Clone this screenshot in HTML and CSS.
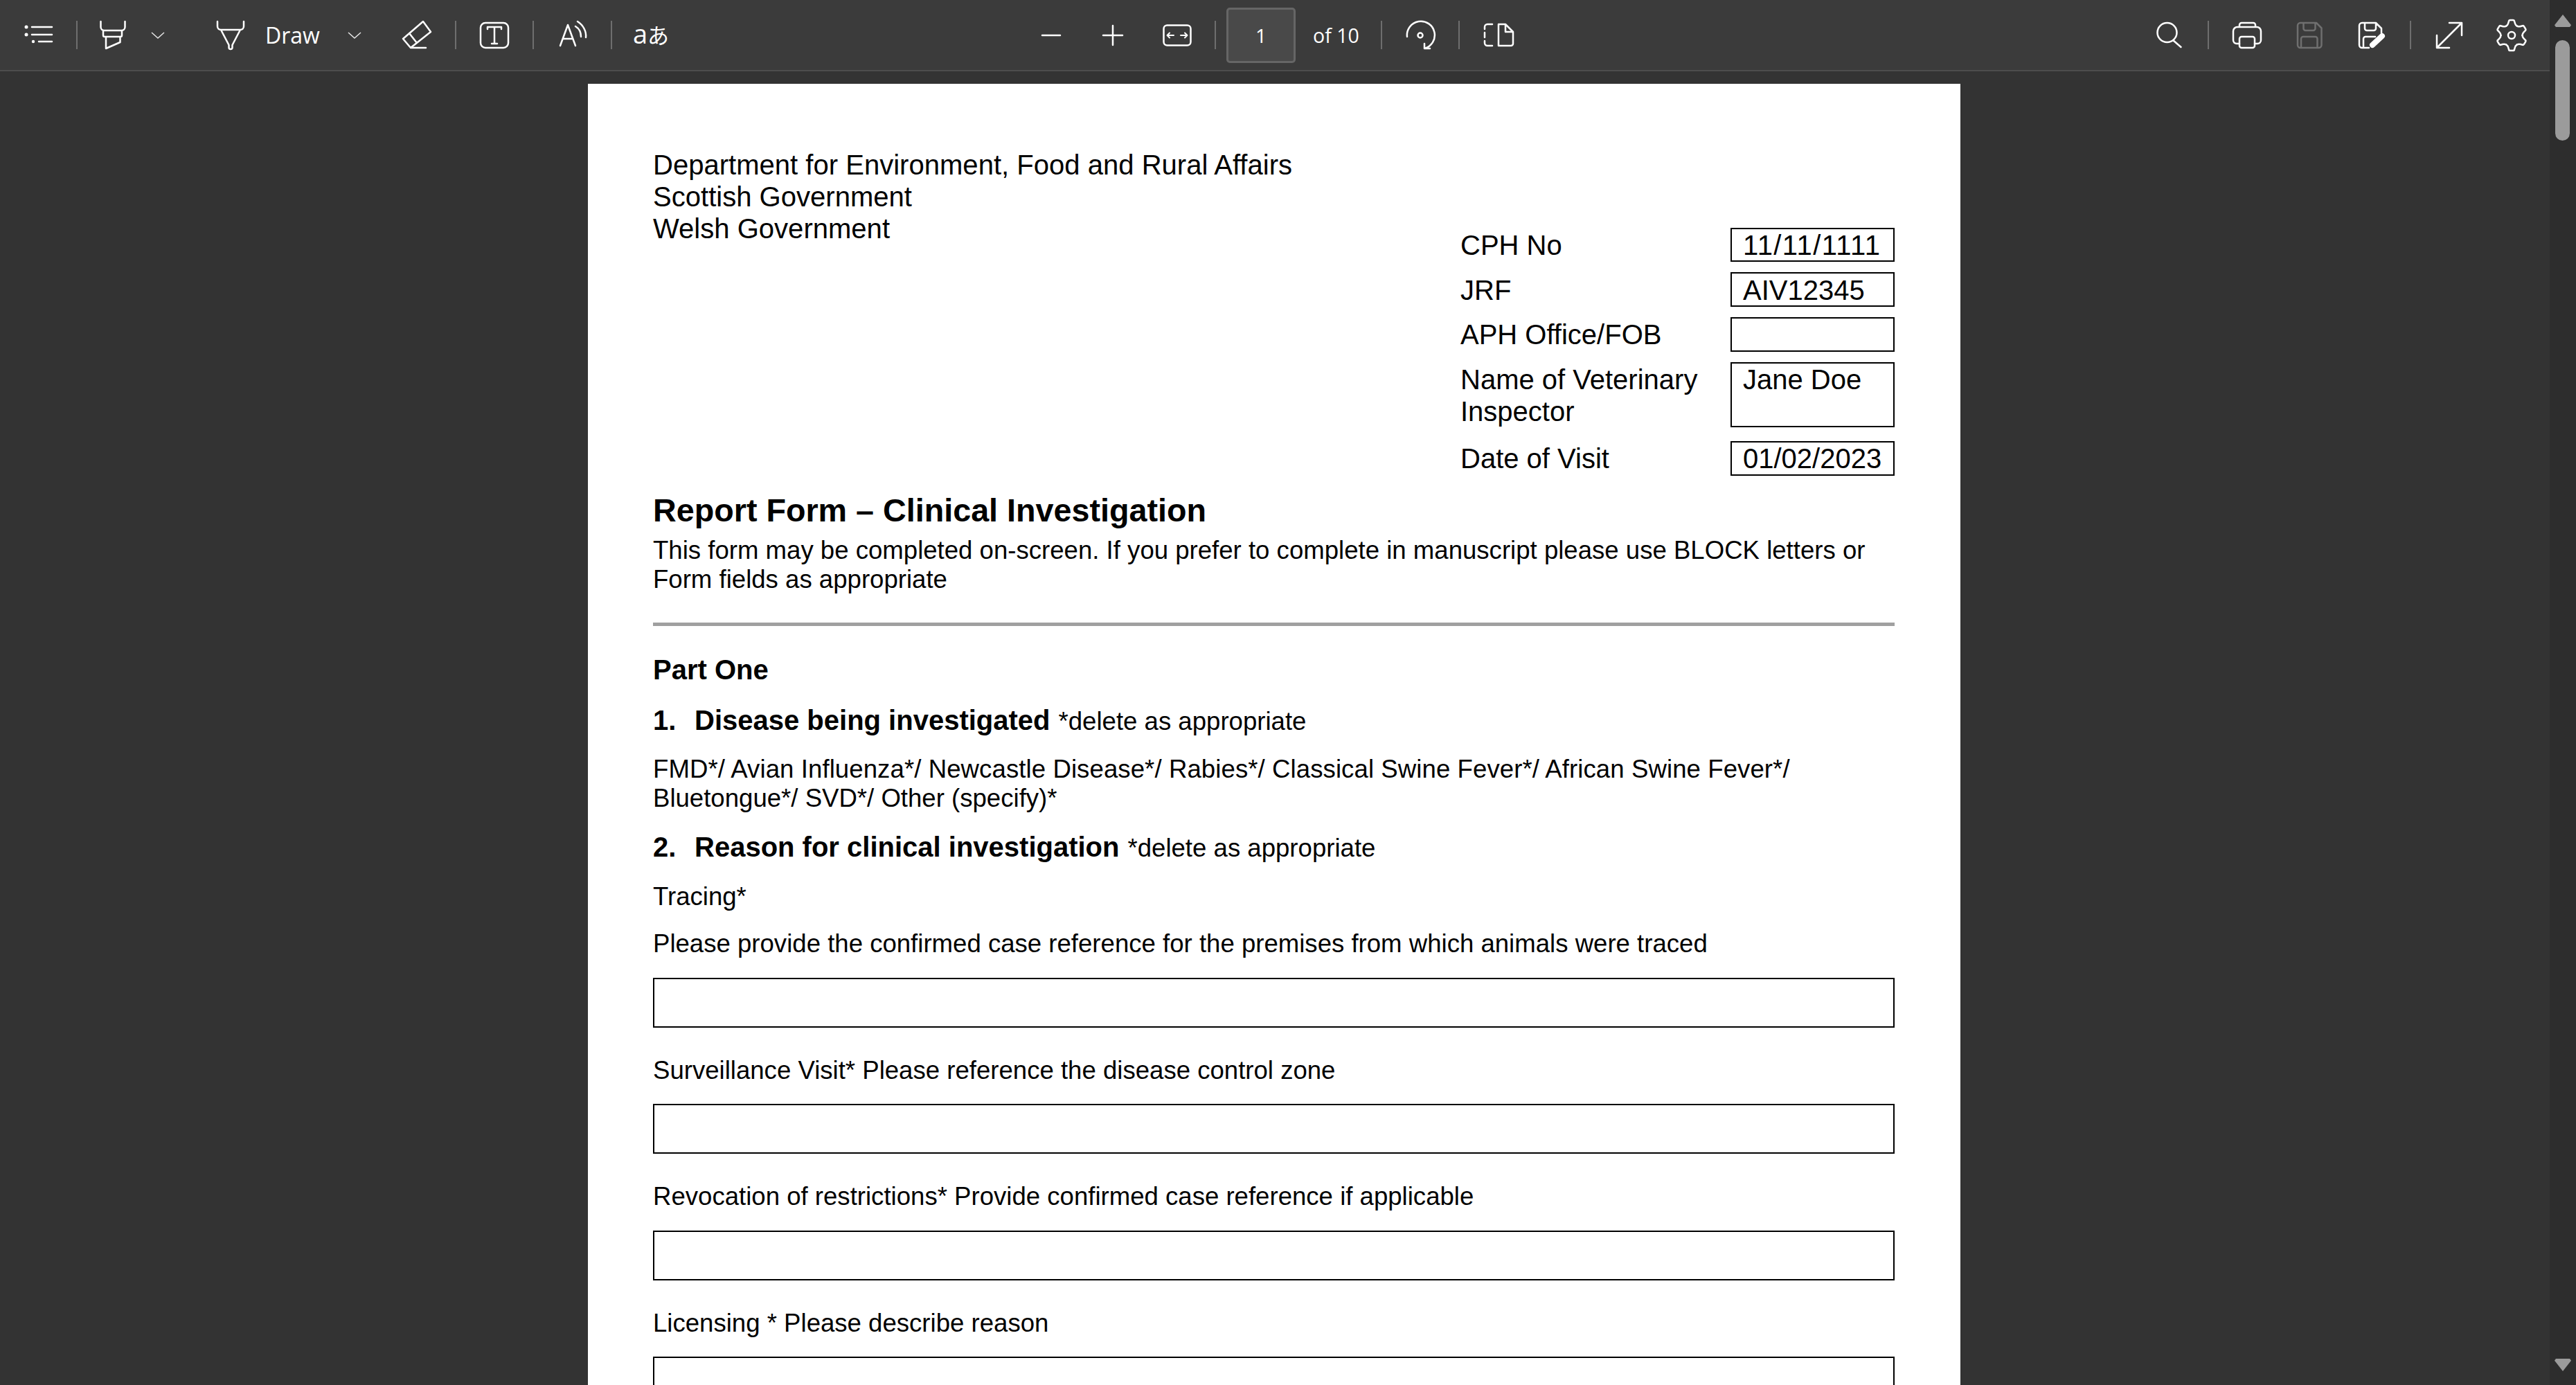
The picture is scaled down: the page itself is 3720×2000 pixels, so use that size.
FILE: index.html
```html
<!DOCTYPE html>
<html lang="en">
<head>
<meta charset="utf-8">
<title>PDF viewer</title>
<link rel="stylesheet" href="styles.css">
</head>
<body>
<div class="app">
  <div class="main">
    <header class="toolbar">
      <div class="group group-left">
        <span class="slot s110"><svg class="ic" viewBox="0 0 48 48"><path d="M15 12H44M15 23H44M25 33H44"/><circle class="fill" cx="7" cy="12" r="2.5"/><circle class="fill" cx="7" cy="23" r="2.5"/><circle class="fill" cx="17" cy="33" r="2.2"/></svg></span>
        <span class="sep"></span>
        <span class="slot s100"><svg class="ic" viewBox="0 0 48 48"><path d="M7.5 4V12a5 5 0 0 0 5 5H37.5a5 5 0 0 0 5-5V4M11 17V24a2 2 0 0 0 2 2H36a2 2 0 0 0 2-2V17M15 26V43L35.5 34V26"/></svg></span>
        <span class="slot s32"><svg class="chev" viewBox="0 0 20 10"><path d="M1 1L10 9L19 1"/></svg></span>
        <span class="slot s38 ml70"><svg class="ic" viewBox="0 0 48 48"><path d="M5 4V11a5 5 0 0 0 5 5H38a5 5 0 0 0 5-5V4M10 16L21.5 38V41.5a2.5 2.5 0 0 0 5 0V38L38 16"/></svg></span>
        <span class="draw">Draw</span>
        <span class="slot s32"><svg class="chev" viewBox="0 0 20 10"><path d="M1 1L10 9L19 1"/></svg></span>
        <span class="slot s111 ml18"><svg class="ic" viewBox="0 0 48 48"><path d="M33 4L44 19L15 42L4 29ZM13 21L24 35M15 42H37"/></svg></span>
        <span class="sep"></span>
        <span class="slot s110"><svg class="ic" viewBox="0 0 48 48"><rect x="4" y="6" width="40" height="36" rx="7"/><path d="M14 15V12H34V15M24 12V36M20 36H28"/></svg></span>
        <span class="sep"></span>
        <span class="slot s111"><svg class="ic" viewBox="0 0 48 48"><path d="M6 39L17 9L28 39M10 29H24M31 4C39 9 44 18 43 27M28 11C33 14 36 20 36 26"/></svg></span>
        <span class="sep"></span>
        <span class="slot s112"><span class="translate"><span class="latin">a</span>あ</span></span>
      </div>
      <div class="group group-center">
        <span class="slot s90"><svg class="ic" viewBox="0 0 48 48"><path d="M11 24H37"/></svg></span>
        <span class="slot s88"><svg class="ic" viewBox="0 0 48 48"><path d="M10 24H38M24 10V38"/></svg></span>
        <span class="slot s98"><svg class="ic" viewBox="0 0 48 48"><rect x="4.5" y="9.5" width="39" height="29" rx="5"/><path class="thin" d="M9.5 24H19M9.5 24L13 20.5M9.5 24L13 27.500M38.500 24H29M38.500 24L35 20.500M38.500 24L35 27.500"/></svg></span>
        <span class="sep ml5"></span>
        <span class="page-input">1</span>
        <span class="page-total">of 10</span>
        <span class="sep"></span>
        <span class="slot s110"><svg class="ic" viewBox="0 0 48 48"><path d="M5 26A20 20 0 1 1 30 43M30 36V43H38"/><circle cx="24" cy="24" r="3.500"/></svg></span>
        <span class="sep"></span>
        <span class="slot s114"><svg class="ic" viewBox="0 0 48 48"><path d="M23 8H33L44 19V36a3 3 0 0 1-3 3H23ZM33 8V19H44"/><path d="M14 8H7a4 4 0 0 0-4 4V15M3 20V27M3 32V35a4 4 0 0 0 4 4H14"/></svg></span>
      </div>
      <div class="group group-right">
        <span class="slot s110"><svg class="ic" viewBox="0 0 48 48"><circle cx="20.500" cy="20" r="14"/><path d="M29 31L40.500 41"/></svg></span>
        <span class="sep"></span>
        <span class="slot s110"><svg class="ic" viewBox="0 0 48 48"><path d="M13 12V9a3 3 0 0 1 3-3H33a3 3 0 0 1 3 3V12M13 36H9a5 5 0 0 1-5-5V18a6 6 0 0 1 6-6H38a6 6 0 0 1 6 6V31a5 5 0 0 1-5 5H35"/><rect x="13" y="26" width="22" height="16" rx="3"/></svg></span>
        <span class="slot s70"><svg class="ic off" viewBox="0 0 48 48"><path d="M11 6H34L41.500 13.500V38a4 4 0 0 1-4 4H11a4 4 0 0 1-4-4V10a4 4 0 0 1 4-4ZM15.500 6V14a3 3 0 0 0 3 3H29.500a3 3 0 0 0 3-3V6M12 42V29a3 3 0 0 1 3-3H32.500a3 3 0 0 1 3 3V42"/></svg></span>
        <span class="slot s110"><svg class="ic" viewBox="0 0 48 48"><path d="M20 42H10a4 4 0 0 1-4-4V10a4 4 0 0 1 4-4H30L38 14V21M14 6V14a3 3 0 0 0 3 3H27a3 3 0 0 0 3-3V6M12 42V29a3 3 0 0 1 3-3H29"/><path class="pencil" d="M25 38L39 25"/></svg></span>
        <span class="sep"></span>
        <span class="slot s110"><svg class="ic" viewBox="0 0 48 48"><path d="M24 6H42V24M6 24V42H24M6 42L42 6"/></svg></span>
        <span class="slot s70"><svg class="ic" viewBox="0 0 48 48"><g transform="translate(24 24)"><path d="M-7.750 -13.400Q-5.500 -15 -5 -17L-4 -20.500Q-3.800 -22 -2 -22H2Q3.800 -22 4 -20.500L5 -17Q5.500 -15 7.750 -13.400"/><path transform="rotate(60)" d="M-7.750 -13.400Q-5.500 -15 -5 -17L-4 -20.500Q-3.800 -22 -2 -22H2Q3.800 -22 4 -20.500L5 -17Q5.500 -15 7.750 -13.400"/><path transform="rotate(120)" d="M-7.750 -13.400Q-5.500 -15 -5 -17L-4 -20.500Q-3.800 -22 -2 -22H2Q3.800 -22 4 -20.500L5 -17Q5.500 -15 7.750 -13.400"/><path transform="rotate(180)" d="M-7.750 -13.400Q-5.500 -15 -5 -17L-4 -20.500Q-3.800 -22 -2 -22H2Q3.800 -22 4 -20.500L5 -17Q5.500 -15 7.750 -13.400"/><path transform="rotate(240)" d="M-7.750 -13.400Q-5.500 -15 -5 -17L-4 -20.500Q-3.800 -22 -2 -22H2Q3.800 -22 4 -20.500L5 -17Q5.500 -15 7.750 -13.400"/><path transform="rotate(300)" d="M-7.750 -13.400Q-5.500 -15 -5 -17L-4 -20.500Q-3.800 -22 -2 -22H2Q3.800 -22 4 -20.500L5 -17Q5.500 -15 7.750 -13.400"/><circle r="5"/></g></svg></span>
      </div>
    </header>
    <main class="viewer">
      <article class="page">
        <div class="head">
          <div class="org">Department for Environment, Food and Rural Affairs<br>Scottish Government<br>Welsh Government</div>
          <div class="refs">
            <div class="lab">CPH No</div><div class="box h49 wide">11/11/1111</div>
            <div class="lab nudge">JRF</div><div class="box h50 nudge">AIV12345</div>
            <div class="lab">APH Office/FOB</div><div class="box h50"></div>
            <div class="lab">Name of Veterinary Inspector</div><div class="box h94">Jane Doe</div>
            <div class="lab last">Date of Visit</div><div class="box h50 last">01/02/2023</div>
          </div>
        </div>
        <h1 class="title">Report Form – Clinical Investigation</h1>
        <p class="small p-intro">This form may be completed on-screen. If you prefer to complete in manuscript please use BLOCK letters or<br>Form fields as appropriate</p>
        <hr class="rule">
        <h2 class="part">Part One</h2>
        <h3 class="q q1"><span class="num">1.</span><b>Disease being investigated</b> <span class="note">*delete as appropriate</span></h3>
        <p class="small p-fmd"><span class="fit">FMD*/ Avian Influenza*/ Newcastle Disease*/ Rabies*/ Classical Swine Fever*/ African Swine Fever*/</span><br>Bluetongue*/ SVD*/ Other (specify)*</p>
        <h3 class="q q2"><span class="num">2.</span><b>Reason for clinical investigation</b> <span class="note">*delete as appropriate</span></h3>
        <p class="small p-tracing">Tracing*</p>
        <p class="small p-ref">Please provide the confirmed case reference for the premises from which animals were traced</p>
        <div class="field"></div>
        <p class="small p-after">Surveillance Visit* Please reference the disease control zone</p>
        <div class="field"></div>
        <p class="small p-after">Revocation of restrictions* Provide confirmed case reference if applicable</p>
        <div class="field"></div>
        <p class="small p-after">Licensing * Please describe reason</p>
        <div class="field"></div>
      </article>
    </main>
  </div>
  <aside class="scrollbar">
    <span class="arrow up"></span>
    <span class="thumb"></span>
    <span class="arrow down"></span>
  </aside>
</div>
</body>
</html>
```
FILE: styles.css
```css
* { box-sizing: border-box; }
html, body { margin: 0; height: 100%; overflow: hidden; background: #333; }
.app { display: flex; height: 2000px; width: 3720px; overflow: hidden; }
.main { width: 3682px; display: flex; flex-direction: column; height: 100%; }

.toolbar { height: 103px; flex: none; display: flex; align-items: center; background: #3b3b3b; border-bottom: 2px solid #4d4d4d; color: #fff; font-family: "Open Sans", "Liberation Sans", sans-serif; }
.group { display: flex; align-items: center; height: 100%; }
.group-center { margin-left: 477px; }
.group-right { margin-left: auto; padding-right: 20px; }
.slot { display: flex; align-items: center; justify-content: center; flex: none; }
.s32 { width: 32px; } .s38 { width: 38px; } .s70 { width: 70px; } .s88 { width: 88px; } .s90 { width: 90px; } .s98 { width: 98px; }
.s100 { width: 100px; } .s110 { width: 110px; } .s111 { width: 111px; } .s112 { width: 112px; } .s114 { width: 114px; }
.ml70 { margin-left: 70px; } .ml18 { margin-left: 18px; } .ml5 { margin-left: 5px; }
.sep { width: 2px; height: 41px; background: #6e6e6e; flex: none; }
.ic { width: 48px; height: 48px; flex: none; fill: none; stroke: #fff; stroke-width: 2.5; stroke-linecap: round; stroke-linejoin: round; }
.ic .fill { fill: #fff; stroke: none; }
.ic .thin { stroke-width: 2; }
.ic .pencil { stroke-width: 8; }
.ic.off { stroke: #6f6f6f; }
.chev { width: 20px; height: 10px; fill: none; stroke: #e6e6e6; stroke-width: 1.5; }
.draw { width: 113px; margin-left: 31px; flex: none; font-size: 32px; line-height: 40px; }
.translate { font-family: "Noto Sans CJK JP", sans-serif; font-size: 31px; line-height: 40px; display: flex; align-items: baseline; padding-bottom: 3px; }
.latin { font-family: "Open Sans", sans-serif; font-size: 38px; }
.page-input { width: 100px; height: 80px; margin-left: 15px; flex: none; display: flex; align-items: center; justify-content: center; background: #494949; border: 3px solid #666; border-radius: 5px; font-size: 28px; }
.page-total { width: 123px; padding-left: 25px; flex: none; font-size: 28.5px; }

.viewer { flex: 1; min-height: 0; overflow: hidden; padding: 18px 2px 0 0; display: flex; justify-content: center; }
.page { width: 1982px; flex: none; background: #fff; color: #000; padding: 94px 95px 0 94px; font-family: "Liberation Sans", Arial, sans-serif; font-size: 36.6px; line-height: 42.5px; height: 2400px; }

.head { display: flex; justify-content: space-between; }
.org { font-size: 40.05px; line-height: 46px; }
.refs { margin-top: 114px; width: 627px; display: grid; grid-template-columns: 390px 237px; row-gap: 15px; font-size: 40px; line-height: 46px; align-items: start; }
.lab { padding-top: 2px; }
.lab.nudge { padding-top: 3px; }
.box { border: 2px solid #000; padding-left: 16px; overflow: hidden; white-space: nowrap; }
.box.nudge { padding-top: 1px; }
.wide { letter-spacing: 1.4px; }
.h49 { height: 49px; } .h50 { height: 50px; } .h94 { height: 94px; }
.last { margin-top: 5px; }

.title { margin: 22.5px 0 0; font-size: 46.7px; line-height: 54px; font-weight: 700; }
.small { margin: 0; }
.p-intro { margin-top: 10px; }
.rule { margin: 40px 0 0; height: 5px; border: 0; background: #a0a0a0; }
.part { margin: 40px 0 0; font-size: 40px; line-height: 46px; font-weight: 700; }
.q { margin: 27px 0 0; font-size: 40px; line-height: 46px; font-weight: 400; display: flex; align-items: baseline; white-space: pre; }
.q b { font-weight: 700; }
.num { width: 60px; font-weight: 700; flex: none; }
.note { font-size: 36.6px; margin-left: 12px; }
.p-fmd { margin-top: 25px; }
.fit { letter-spacing: .08px; }
.q2 { margin-top: 25px; }
.p-tracing { margin-top: 26px; }
.p-ref { margin-top: 26px; }
.field { height: 72px; margin-top: 27px; border: 2px solid #000; }
.p-after { margin-top: 41px; }

.scrollbar { width: 38px; flex: none; height: 100%; background: #2d2d2d; position: relative; }
.thumb { position: absolute; left: 8px; top: 58px; width: 21px; height: 145px; border-radius: 11px; background: #9b9b9b; }
.arrow { position: absolute; left: 7px; width: 24px; height: 18px; background: #9b9b9b; }
.arrow.up { top: 21px; clip-path: polygon(50% 0, 100% 85%, 92% 100%, 8% 100%, 0 85%); }
.arrow.down { top: 1962px; clip-path: polygon(8% 0, 92% 0, 100% 15%, 50% 100%, 0 15%); }
```
